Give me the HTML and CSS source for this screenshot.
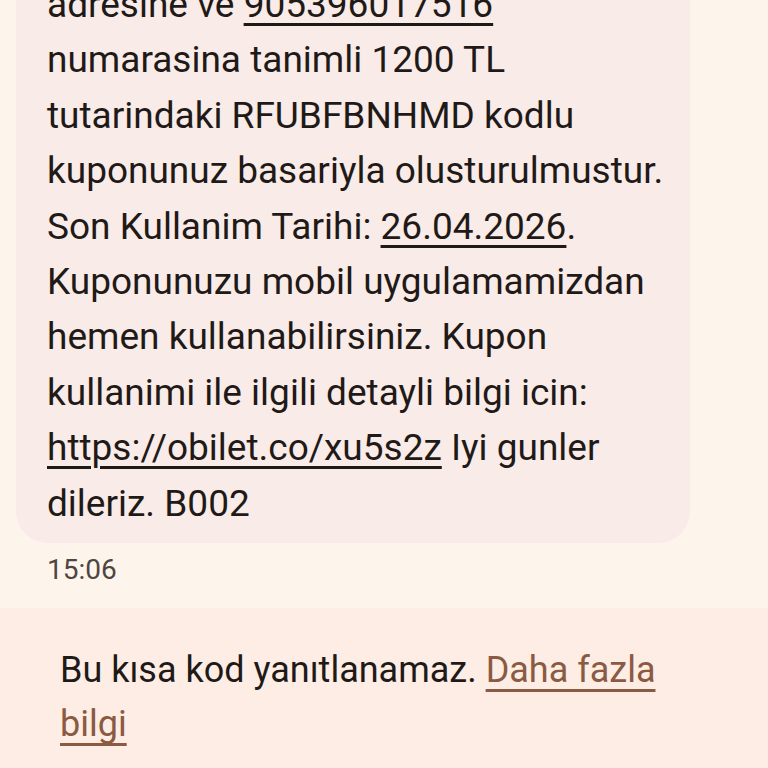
FILE: index.html
```html
<!DOCTYPE html>
<html lang="tr">
<head>
<meta charset="utf-8">
<link rel="stylesheet" href="styles.css">
</head>
<body>
<div class="thread">
  <div class="bubble">
    <p class="msg">adresine ve <span class="u">905396017516</span><br>numarasina tanimli 1200 TL<br>tutarindaki RFUBFBNHMD kodlu<br>kuponunuz basariyla olusturulmustur.<br>Son Kullanim Tarihi: <span class="u">26.04.2026</span>.<br>Kuponunuzu mobil uygulamamizdan<br>hemen kullanabilirsiniz. Kupon<br>kullanimi ile ilgili detayli bilgi icin:<br><span class="u">https://obilet.co/xu5s2z</span> Iyi gunler<br>dileriz. B002</p>
  </div>
  <div class="time">15:06</div>
</div>
<div class="notice">
  <p class="notice-text">Bu kısa kod yanıtlanamaz. <span class="link">Daha fazla<br>bilgi</span></p>
</div>
</body>
</html>
```
FILE: styles.css
```css
html, body {
  margin: 0;
  padding: 0;
  background: #fdf4ec;
  font-family: Roboto, "Open Sans", sans-serif;
  color: #1f1a18;
}
body {
  width: 768px;
  height: 768px;
  overflow: hidden;
}
.thread {
  padding: 0 16px;
}
.bubble {
  width: 674px;
  box-sizing: border-box;
  margin-top: -33px;
  padding: 10px 0 12px 31px;
  background: #f9ebe7;
  border-radius: 0 0 32px 32px;
}
.msg {
  margin: 0;
  font-size: 37px;
  line-height: 55.4px;
  white-space: nowrap;
}
.u {
  text-decoration: underline;
  text-decoration-thickness: 3px;
  text-underline-offset: 6px;
}
.time {
  padding: 12px 0 0 31px;
  height: 53px;
  font-size: 28px;
  line-height: 30px;
  color: #4f4542;
}
.notice {
  background: #fdede4;
  height: 160px;
  padding: 35px 0 0 60px;
  box-sizing: border-box;
}
.notice-text {
  margin: 0;
  font-size: 36px;
  line-height: 54px;
}
.link {
  color: #8a5a42;
  text-decoration: underline;
  text-decoration-thickness: 3px;
  text-underline-offset: 7px;
}
```
